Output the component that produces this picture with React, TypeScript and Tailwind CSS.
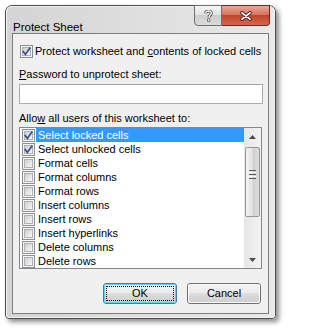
import React from "react";

const items: { label: string; checked: boolean }[] = [
  { label: "Select locked cells", checked: true },
  { label: "Select unlocked cells", checked: true },
  { label: "Format cells", checked: false },
  { label: "Format columns", checked: false },
  { label: "Format rows", checked: false },
  { label: "Insert columns", checked: false },
  { label: "Insert rows", checked: false },
  { label: "Insert hyperlinks", checked: false },
  { label: "Delete columns", checked: false },
  { label: "Delete rows", checked: false },
];

function Check({ checked }: { checked: boolean }) {
  return (
    <div className="relative w-[13px] h-[13px] flex-none border border-[#8e8f8f] bg-[#f4f4f4] p-[1px]">
      <div className="w-full h-full border border-[#adb2b5] bg-[linear-gradient(135deg,#cbcfd5,#f7f7f7)]" />
      {checked && (
        <svg className="absolute left-0 top-0" width="11" height="11" viewBox="0 0 11 11">
          <path d="M2.2 5.6 L4.4 8.4 L8.8 2.2" fill="none" stroke="#3d5189" strokeWidth="1.7" strokeLinecap="square" />
        </svg>
      )}
    </div>
  );
}

function Button({ children, isDefault }: { children: React.ReactNode; isDefault?: boolean }) {
  return (
    <div
      className={
        "w-[74px] h-[21px] rounded-[3px] border " +
        (isDefault ? "border-[#3c7fb1]" : "border-[#707070]")
      }
    >
      <div
        className={
          "w-full h-full rounded-[2px] border flex items-center justify-center bg-[linear-gradient(#f2f2f2_0%,#ebebeb_50%,#dddddd_50%,#cfcfcf_100%)] " +
          (isDefault ? "border-[#5ed0f6] p-[1px]" : "border-[#fbfbfb]")
        }
      >
        {isDefault ? (
          <div className="w-full h-full border border-dotted border-black flex items-center justify-center">
            <span className="text-[11px] leading-[13px] text-black">{children}</span>
          </div>
        ) : (
          <span className="text-[11px] leading-[13px] text-black">{children}</span>
        )}
      </div>
    </div>
  );
}

export default function App() {
  return (
    <div className="w-[286px] h-[329px] bg-white pt-[5px] pl-[5px] font-['Liberation_Sans',Arial,sans-serif] text-black">
      <div className="relative w-[271px] h-[314px] rounded-t-[7px] rounded-b-[4px] border border-[#4a4a4a] bg-[linear-gradient(90deg,#d4d4d4,#e9e9e9)] shadow-[3px_3px_5px_rgba(0,0,0,0.45)] flex flex-col">
        {/* inner highlight */}
        <div className="absolute inset-0 rounded-t-[6px] rounded-b-[3px] border border-[#f3f3f3] pointer-events-none" />
        {/* title bar */}
        <div className="h-[27px] pl-[7px] pt-[8px] flex-none">
          <span className="text-[11.5px] leading-[14px]">Protect Sheet</span>
        </div>
        {/* caption buttons */}
        <div className="absolute top-[-1px] right-[5px] flex h-[21px]">
          <div className="w-[28px] h-full border border-[#6f6f6f] rounded-bl-[4px] bg-[linear-gradient(#f6f6f6,#e2e2e2_45%,#cdcdcd_50%,#dadada)] flex items-center justify-center">
            <svg width="9" height="12" viewBox="0 0 9 12">
              <path d="M1.8 3.6 C1.8 1.6 3 1 4.5 1 C6 1 7.3 1.8 7.3 3.4 C7.3 5 5 5.2 5 7.2" fill="none" stroke="#4b4b4b" strokeWidth="3" />
              <path d="M1.8 3.6 C1.8 1.6 3 1 4.5 1 C6 1 7.3 1.8 7.3 3.4 C7.3 5 5 5.2 5 7.2" fill="none" stroke="#ffffff" strokeWidth="1.3" />
              <rect x="3.3" y="8.6" width="3" height="3" fill="#4b4b4b" />
              <rect x="4" y="9.3" width="1.6" height="1.6" fill="#ffffff" />
            </svg>
          </div>
          <div className="w-[48px] h-full border border-l-0 border-[#6b2b20] rounded-br-[4px] bg-[linear-gradient(#e9a897,#d8735d_45%,#c2452b_50%,#d2694f)] flex items-center justify-center">
            <svg width="14" height="10" viewBox="0 0 14 10">
              <path d="M3 1.8 L11 8.2 M11 1.8 L3 8.2" fill="none" stroke="#4a2a26" strokeWidth="3.6" strokeLinecap="round" />
              <path d="M3 1.8 L11 8.2 M11 1.8 L3 8.2" fill="none" stroke="#ffffff" strokeWidth="1.7" strokeLinecap="round" />
            </svg>
          </div>
        </div>
        {/* client area */}
        <div className="mx-[6px] h-[281px] flex-none border border-[#7d7d7d] bg-[#f0f0f0] pl-[6px] pr-[5px] flex flex-col">
          <div className="mt-[11px] ml-[1px] flex items-center gap-[2px] h-[13px]">
            <Check checked={true} />
            <span className="text-[11px] leading-[13px] whitespace-nowrap">
              Protect worksheet and <span className="underline">c</span>ontents of locked cells
            </span>
          </div>
          <div className="mt-[9px] h-[14px] text-[11px] leading-[14px]">
            <span className="underline">P</span>assword to unprotect sheet:
          </div>
          <div className="mt-[3px] w-[244px] h-[20px] border border-[#abadb3] border-t-[#a0a3a9] bg-white" />
          <div className="mt-[7px] h-[14px] text-[11px] leading-[14px]">
            Allo<span className="underline">w</span> all users of this worksheet to:
          </div>
          <div className="mt-[2px] w-[243px] h-[142px] border border-[#828790] bg-white flex">
            <div className="flex-1 flex flex-col">
              {items.map((it, i) => (
                <div key={it.label} className="h-[14px] flex items-center pl-[2px]">
                  <Check checked={it.checked} />
                  <div
                    className={
                      "ml-[1px] flex-1 h-[14px] pl-[2px] flex items-center text-[11px] leading-[14px] whitespace-nowrap " +
                      (i === 0 ? "bg-[#3399ff] text-white" : "text-black")
                    }
                  >
                    {it.label}
                  </div>
                </div>
              ))}
            </div>
            {/* scrollbar */}
            <div className="w-[17px] h-full bg-[linear-gradient(90deg,#e6e6e6,#f3f3f3)] flex flex-col items-center">
              <div className="h-[17px] w-full flex items-center justify-center">
                <svg width="7" height="4" viewBox="0 0 7 4">
                  <path d="M0 4 L3.5 0 L7 4 Z" fill="#4d4d4d" />
                </svg>
              </div>
              <div className="mt-[2px] w-[15px] h-[70px] rounded-[2px] border border-[#979797] bg-[linear-gradient(90deg,#f3f3f3,#e4e4e4_45%,#d2d2d2_55%,#dcdcdc)] flex flex-col items-center pt-[22px] gap-[1px]">
                <div className="w-[7px] h-[1px] bg-[#5a5a5a]" />
                <div className="w-[7px] h-[1px] bg-[#f8f8f8]" />
                <div className="w-[7px] h-[1px] bg-[#5a5a5a]" />
                <div className="w-[7px] h-[1px] bg-[#f8f8f8]" />
                <div className="w-[7px] h-[1px] bg-[#5a5a5a]" />
              </div>
              <div className="flex-1" />
              <div className="h-[17px] w-full flex items-center justify-center">
                <svg width="7" height="4" viewBox="0 0 7 4">
                  <path d="M0 0 L7 0 L3.5 4 Z" fill="#4d4d4d" />
                </svg>
              </div>
            </div>
          </div>
          <div className="mt-[14px] flex justify-end gap-[10px] pr-[2px]">
            <Button isDefault>OK</Button>
            <Button>Cancel</Button>
          </div>
        </div>
      </div>
    </div>
  );
}
